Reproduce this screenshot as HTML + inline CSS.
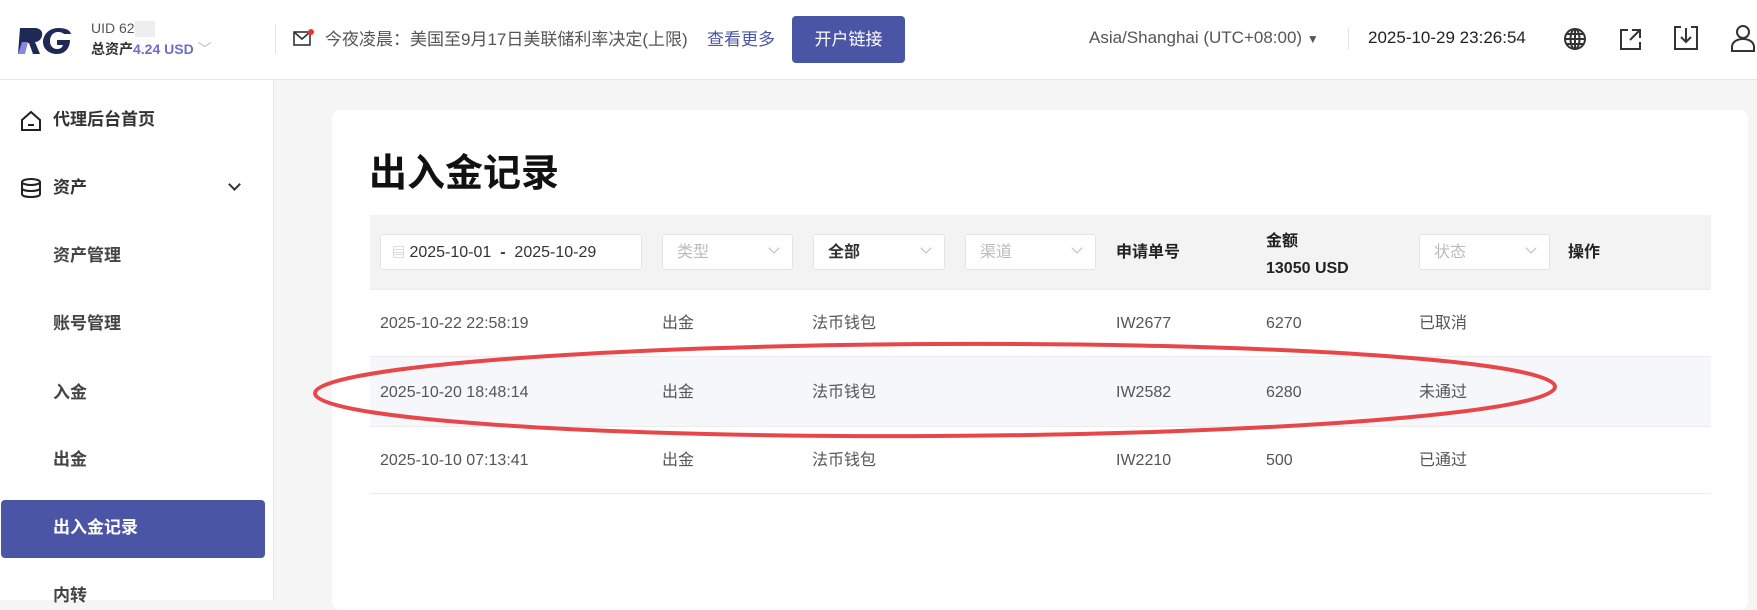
<!DOCTYPE html>
<html><head><meta charset="utf-8"><style>
*{margin:0;padding:0;box-sizing:border-box}
body{width:1757px;height:600px;overflow:hidden;background:#f5f5f5;font-family:"Liberation Sans","Noto Sans CJK SC",sans-serif;position:relative;color:#333;line-height:1.2}
.a{position:absolute;white-space:nowrap}
#hdr{left:0;top:0;width:1757px;height:80px;background:#fff;border-bottom:1px solid #e6e6e6}
#side{left:0;top:80px;width:274px;height:520px;background:#fff;border-right:1px solid #e8e8e8}
.nav{font-size:17px;font-weight:bold;color:#444}
#card{left:332px;top:110px;width:1416px;height:500px;background:#fff;border-radius:8px}
.inp{position:absolute;top:234px;height:36px;background:#fff;border:1px solid #e4e4e4;border-radius:3px;font-size:16px;color:#bbb;padding:8px 14px}
.inp .c{position:absolute;right:14px;top:9px;width:8px;height:8px;border-right:1px solid #bbb;border-bottom:1px solid #bbb;transform:rotate(45deg)}
.td{font-size:16px;color:#555}
.th{font-size:16px;font-weight:bold;color:#222}
</style></head><body>
<div class="a" id="hdr"></div>
<svg class="a" style="left:18px;top:26px" width="54" height="30" viewBox="0 0 54 30"><path d="M2 2h14c7 0 9 4 8 8-1 4-4 6-7 6l5 12h-7l-4-11h-2l-3 11H0z" fill="#1e2a55"/><path d="M0 28l4-12h6l-3 12z" fill="#8a85e0"/><path d="M40 2c8 0 12 2 13 6h-7c-1-1-3-2-6-2-5 0-8 4-8 9s3 8 7 8c3 0 5-1 6-4h-6v-5h13c0 8-5 14-13 14s-14-5-14-12 6-14 15-14z" fill="#1e2a55"/></svg>
<div class="a" style="left:91px;top:20px;font-size:14px;color:#555">UID 62<span style="display:inline-block;width:20px;height:16px;background:#eee;vertical-align:middle"></span></div>
<div class="a" style="left:91px;top:41px;font-size:14px;font-weight:bold;color:#333">总资产<span style="color:#6f6cc7">4.24 USD</span> <span style="color:#bbb;font-weight:normal">﹀</span></div>
<div class="a" style="left:275px;top:24px;width:1px;height:30px;background:#e3e3e3"></div>
<svg class="a" style="left:293px;top:28px" width="22" height="20" viewBox="0 0 22 20"><rect x="1" y="4" width="16" height="13" fill="none" stroke="#333" stroke-width="1.6"/><path d="M1 4l8 7 8-7" fill="none" stroke="#333" stroke-width="1.6"/><circle cx="18" cy="4" r="3" fill="#e33"/></svg>
<div class="a" style="left:325px;top:30px;font-size:17px;color:#555">今夜凌晨：美国至9月17日美联储利率决定(上限)</div>
<div class="a" style="left:707px;top:30px;font-size:17px;color:#4b55a6">查看更多</div>
<div class="a" style="left:792px;top:16px;width:113px;height:47px;background:#4b55a6;border-radius:4px;color:#fff;font-size:17px;text-align:center;line-height:47px">开户链接</div>
<div class="a" style="left:1089px;top:28px;font-size:17px;color:#555">Asia/Shanghai (UTC+08:00) <span style="font-size:12px">▼</span></div>
<div class="a" style="left:1348px;top:28px;width:1px;height:22px;background:#e3e3e3"></div>
<div class="a" style="left:1368px;top:28px;font-size:17px;color:#222">2025-10-29 23:26:54</div>
<svg class="a" style="left:1562px;top:26px" width="26" height="26" viewBox="0 0 26 26" fill="none" stroke="#333" stroke-width="2"><circle cx="13" cy="13" r="10"/><ellipse cx="13" cy="13" rx="4.5" ry="10"/><path d="M3 13h20M13 3v20M5 8h16M5 18h16"/></svg>
<svg class="a" style="left:1618px;top:26px" width="26" height="26" viewBox="0 0 26 26" fill="none" stroke="#333" stroke-width="2"><path d="M10 4H3v19h19v-7M14 4h8v8M22 4l-10 10"/></svg>
<svg class="a" style="left:1673px;top:25px" width="26" height="26" viewBox="0 0 26 26" fill="none" stroke="#333" stroke-width="2"><path d="M8 2H2v22h22V2h-6M13 3v14M8 12l5 5 5-5"/></svg>
<svg class="a" style="left:1729px;top:24px" width="28" height="28" viewBox="0 0 28 28" fill="none" stroke="#333" stroke-width="2"><circle cx="14" cy="8" r="6"/><path d="M3 27v-4c0-5 5-8 11-8s11 3 11 8v4z"/></svg>

<div class="a" id="side"></div>
<svg class="a" style="left:20px;top:110px" width="22" height="22" viewBox="0 0 22 22" fill="none" stroke="#222" stroke-width="2"><path d="M2 10L11 2l9 8v10H2z"/><path d="M8 15h6"/></svg>
<div class="a nav" style="left:53px;top:110px;color:#333">代理后台首页</div>
<svg class="a" style="left:20px;top:178px" width="22" height="20" viewBox="0 0 22 20" fill="none" stroke="#222" stroke-width="2"><ellipse cx="11" cy="4" rx="9" ry="3"/><path d="M2 4v12c0 2 4 3 9 3s9-1 9-3V4M2 10c0 2 4 3 9 3s9-1 9-3"/></svg>
<div class="a nav" style="left:53px;top:178px;color:#333">资产</div>
<div class="a" style="left:230px;top:180px;width:9px;height:9px;border-right:2px solid #333;border-bottom:2px solid #333;transform:rotate(45deg)"></div>
<div class="a nav" style="left:53px;top:246px">资产管理</div>
<div class="a nav" style="left:53px;top:314px">账号管理</div>
<div class="a nav" style="left:53px;top:383px">入金</div>
<div class="a nav" style="left:53px;top:450px">出金</div>
<div class="a" style="left:1px;top:500px;width:264px;height:58px;background:#4b55a6;border-radius:4px"></div>
<div class="a nav" style="left:53px;top:518px;color:#fff">出入金记录</div>
<div class="a nav" style="left:53px;top:586px">内转</div>

<div class="a" id="card"></div>
<div class="a" style="left:369px;top:152px;font-size:38px;font-weight:bold;color:#111">出入金记录</div>
<div class="a" style="left:370px;top:215px;width:1341px;height:74px;background:#f3f3f3"></div>
<div class="a" style="left:370px;top:356px;width:1341px;height:70px;background:#f6f7fa"></div>
<div class="a" style="left:370px;top:289px;width:1341px;height:1px;background:#ececec"></div>
<div class="a" style="left:370px;top:356px;width:1341px;height:1px;background:#ececec"></div>
<div class="a" style="left:370px;top:426px;width:1341px;height:1px;background:#ececec"></div>
<div class="a" style="left:370px;top:493px;width:1341px;height:1px;background:#ececec"></div>
<div class="inp" style="left:380px;width:262px;color:#333;padding-left:11px"><span style="color:#bbb;font-size:13px">▤</span> 2025-10-01 &nbsp;<b>-</b>&nbsp; 2025-10-29</div>
<div class="inp" style="left:662px;width:131px">类型<span class="c"></span></div>
<div class="inp" style="left:813px;width:132px;color:#333;font-weight:bold">全部<span class="c"></span></div>
<div class="inp" style="left:965px;width:131px">渠道<span class="c"></span></div>
<div class="a th" style="left:1116px;top:243px">申请单号</div>
<div class="a th" style="left:1266px;top:228px;line-height:27px">金额<br>13050 USD</div>
<div class="inp" style="left:1419px;width:131px">状态<span class="c"></span></div>
<div class="a th" style="left:1568px;top:243px">操作</div>

<div class="a td" style="left:380px;top:314px">2025-10-22 22:58:19</div><div class="a td" style="left:662px;top:314px">出金</div><div class="a td" style="left:812px;top:314px">法币钱包</div><div class="a td" style="left:1116px;top:314px">IW2677</div><div class="a td" style="left:1266px;top:314px">6270</div><div class="a td" style="left:1419px;top:314px">已取消</div>
<div class="a td" style="left:380px;top:383px">2025-10-20 18:48:14</div><div class="a td" style="left:662px;top:383px">出金</div><div class="a td" style="left:812px;top:383px">法币钱包</div><div class="a td" style="left:1116px;top:383px">IW2582</div><div class="a td" style="left:1266px;top:383px">6280</div><div class="a td" style="left:1419px;top:383px">未通过</div>
<div class="a td" style="left:380px;top:451px">2025-10-10 07:13:41</div><div class="a td" style="left:662px;top:451px">出金</div><div class="a td" style="left:812px;top:451px">法币钱包</div><div class="a td" style="left:1116px;top:451px">IW2210</div><div class="a td" style="left:1266px;top:451px">500</div><div class="a td" style="left:1419px;top:451px">已通过</div>

<svg class="a" style="left:0;top:0" width="1757" height="600"><ellipse cx="935" cy="390" rx="620" ry="46" fill="none" stroke="#e8474a" stroke-width="4" transform="rotate(-0.3 935 390)"/></svg>
</body></html>
